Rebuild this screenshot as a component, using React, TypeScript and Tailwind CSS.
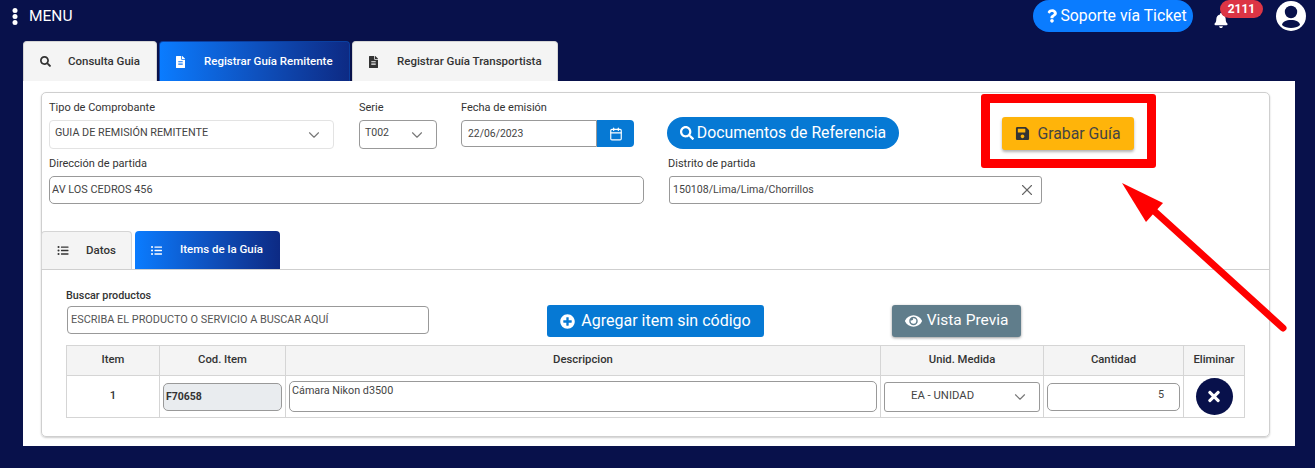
import { Calendar, ChevronDown, X } from "lucide-react";
import { FaBell, FaEye, FaFileAlt, FaListUl, FaPlusCircle, FaQuestion, FaSave, FaSearch, FaTimes } from "react-icons/fa";

const Label = ({ children, className = "" }: { children: React.ReactNode; className?: string }) => (
  <div className={`h-[20px] text-[11px] leading-[16px] text-[#333] ${className}`}>{children}</div>
);

const Chevron = () => <ChevronDown strokeWidth={1.5} className="h-[18px] w-[18px] text-[#777]" />;

export default function App() {
  return (
    <div className="relative h-[468px] w-[1315px] overflow-hidden bg-[#08114b] font-['Roboto',sans-serif]">
      <header className="flex h-[41px] items-start text-white">
        <svg className="ml-[12px] mt-[8px]" width="6" height="17" viewBox="0 0 6 17" fill="currentColor">
          <circle cx="3" cy="2.6" r="2.5" /><circle cx="3" cy="8.5" r="2.5" /><circle cx="3" cy="14.4" r="2.5" />
        </svg>
        <span className="ml-[11px] mt-[7px] text-[15.5px] leading-[19px]">MENU</span>
        <div className="ml-auto flex h-[32px] w-[160px] items-center justify-center gap-[3px] rounded-full bg-[#0a7cff] pl-[8px] text-[15.8px]">
          <FaQuestion className="h-[14px] w-[10px]" />
          <span>Soporte vía Ticket</span>
        </div>
        <div className="relative ml-[21px] mt-[13px] h-[15px] w-[15px]">
          <FaBell className="h-[15px] w-[14px]" />
          <span className="absolute left-[6px] top-[-13px] flex h-[18px] w-[43px] items-center justify-center rounded-full bg-[#dc3545] text-[12px] font-bold">2111</span>
        </div>
        <svg className="ml-[47px] mr-[9px] mt-[1px]" width="30" height="30" viewBox="0 0 30 30">
          <circle cx="15" cy="15" r="15" fill="#fff" />
          <circle cx="15" cy="11" r="6.2" fill="#08114b" />
          <path d="M6 24 C6.5 20.5 10 19 15 19 C20 19 23.5 20.5 24 24 C21.5 26.2 18.5 27 15 27 C11.5 27 8.5 26.2 6 24 Z" fill="#08114b" />
        </svg>
      </header>

      <nav className="ml-[23px] flex h-[40px] items-stretch gap-[2px] text-[11.5px] font-medium">
        <div className="flex w-[134px] items-center gap-[17px] rounded-t-[4px] border border-b-0 border-[#d5d5d5] bg-[#f4f4f4] pl-[16px] text-[#333]">
          <FaSearch className="h-[11px] w-[11px]" /><span>Consulta Guia</span>
        </div>
        <div className="flex w-[191px] items-center gap-[19px] rounded-t-[4px] border border-b-0 border-[#0a3fa0] bg-gradient-to-r from-[#0a7cff] to-[#0d2a84] pl-[16px] text-white">
          <FaFileAlt className="h-[12px] w-[9px]" /><span>Registrar Guía Remitente</span>
        </div>
        <div className="flex w-[206px] items-center gap-[19px] rounded-t-[4px] border border-b-0 border-[#d5d5d5] bg-[#f4f4f4] pl-[16px] text-[#333]">
          <FaFileAlt className="h-[12px] w-[9px]" /><span>Registrar Guía Transportista</span>
        </div>
      </nav>

      <main className="ml-[23px] h-[365px] w-[1272px] bg-white pl-[18px] pt-[11px]">
        <section className="h-[345px] w-[1229px] rounded-[5px] border border-[#cfcfcf] shadow-[0_1px_2px_rgba(0,0,0,0.2)]">
          <div className="flex h-[58px] pl-[7px] pt-[7px]">
            <div className="w-[310px]">
              <Label>Tipo de Comprobante</Label>
              <div className="flex h-[29px] w-[285px] items-center justify-between rounded-[4px] border border-[#e3e3e3] pl-[5px] pr-[10px] text-[10.8px] text-[#444]">
                <span className="pb-[3px]">GUIA DE REMISIÓN REMITENTE</span><Chevron />
              </div>
            </div>
            <div className="w-[102px]">
              <Label>Serie</Label>
              <div className="flex h-[29px] w-[78px] items-center justify-between rounded-[4px] border border-[#999] pl-[5px] pr-[10px] text-[10.5px] text-[#444]">
                <span className="pb-[3px]">T002</span><Chevron />
              </div>
            </div>
            <div className="w-[206px]">
              <Label>Fecha de emisión</Label>
              <div className="flex h-[27px] w-[173px]">
                <div className="flex flex-1 items-center rounded-l-[4px] border border-[#999] pl-[6px] text-[10.4px] text-[#444]">22/06/2023</div>
                <div className="flex w-[37px] items-center justify-center rounded-r-[4px] bg-[#0679d4] text-white"><Calendar strokeWidth={2} className="h-[14px] w-[14px]" /></div>
              </div>
            </div>
            <div className="mt-[17px] flex h-[32px] w-[232px] items-center justify-center gap-[3px] rounded-full bg-[#0679d4] text-[15.8px] text-white">
              <FaSearch className="h-[14px] w-[14px]" /><span>Documentos de Referencia</span>
            </div>
            <div className="ml-[103px] mt-[17px] flex h-[33px] w-[132px] items-center justify-center gap-[7px] rounded-[3px] bg-[#ffb40a] text-[15.8px] text-[#444] shadow-[0_2px_3px_rgba(0,0,0,0.3)]">
              <FaSave className="h-[15px] w-[15px] text-[#333]" /><span>Grabar Guía</span>
            </div>
          </div>

          <div className="flex h-[80px] pl-[7px] pt-[5px]">
            <div className="w-[619px]">
              <Label>Dirección de partida</Label>
              <div className="flex h-[28px] w-[595px] items-center rounded-[5px] border border-[#999] pl-[2px] text-[10.9px] text-[#444]">AV LOS CEDROS 456</div>
            </div>
            <div className="w-[374px]">
              <Label>Distrito de partida</Label>
              <div className="ml-[1px] flex h-[28px] w-[373px] items-center justify-between rounded-[3px] border border-[#999] pl-[3px] pr-[5px] text-[10.6px] text-[#444]">
                <span>150108/Lima/Lima/Chorrillos</span><X strokeWidth={1.5} className="h-[18px] w-[18px] text-[#666]" />
              </div>
            </div>
          </div>

          <div className="-ml-px flex h-[39px] gap-[3px] border-b border-[#cfcfcf] text-[11.5px] font-medium">
            <div className="flex w-[91px] items-center gap-[17px] rounded-t-[4px] border border-b-0 border-[#d5d5d5] bg-[#f4f4f4] pl-[15px] text-[#333]">
              <FaListUl className="h-[11px] w-[12px]" /><span>Datos</span>
            </div>
            <div className="flex w-[145px] items-center gap-[17px] rounded-t-[4px] bg-gradient-to-r from-[#0a7cff] to-[#0d2a84] pl-[15px] text-white">
              <FaListUl className="h-[11px] w-[13px]" /><span>Items de la Guía</span>
            </div>
          </div>

          <div className="pl-[24px] pt-[18px]">
            <div className="flex h-[57px]">
              <div className="w-[481px]">
                <div className="h-[18px] text-[10.8px] font-medium leading-[16px] text-[#333]">Buscar productos</div>
                <div className="ml-[1px] flex h-[28px] w-[362px] items-center rounded-[4px] border border-[#999] pl-[3px] text-[10.9px] text-[#555]">ESCRIBA EL PRODUCTO O SERVICIO A BUSCAR AQUÍ</div>
              </div>
              <div className="mt-[17px] flex h-[32px] w-[217px] items-center justify-center gap-[6px] rounded-[3px] bg-[#0679d4] text-[16px] text-white">
                <FaPlusCircle className="h-[15px] w-[15px]" /><span>Agregar item sin código</span>
              </div>
              <div className="ml-[128px] mt-[17px] flex h-[32px] w-[129px] items-center justify-center gap-[5px] rounded-[3px] bg-[#607d8b] text-[15.5px] text-white shadow-[0_1px_3px_rgba(0,0,0,0.4)]">
                <FaEye className="h-[16px] w-[17px]" /><span>Vista Previa</span>
              </div>
            </div>
            <table className="h-[72px] w-[1178px] table-fixed border-collapse text-[11.3px] text-[#333]">
              <colgroup>
                <col className="w-[93px]" /><col className="w-[126px]" /><col className="w-[595px]" /><col className="w-[163px]" /><col className="w-[140px]" /><col className="w-[61px]" />
              </colgroup>
              <thead>
                <tr className="h-[30px] bg-[#f4f4f4]">
                  {["Item", "Cod. Item", "Descripcion", "Unid. Medida", "Cantidad", "Eliminar"].map((h) => (
                    <th key={h} className="border border-[#d5d5d5] p-0 text-center font-medium">{h}</th>
                  ))}
                </tr>
              </thead>
              <tbody>
                <tr className="h-[42px]">
                  <td className="border border-[#d5d5d5] p-0 text-center font-medium">1</td>
                  <td className="border border-[#d5d5d5] px-[3px] py-0">
                    <div className="flex h-[28px] items-center rounded-[5px] border border-[#999] bg-[#e9ecef] pl-[2px] text-[10.5px] font-bold">F70658</div>
                  </td>
                  <td className="border border-[#d5d5d5] px-[3px] py-0">
                    <div className="h-[31px] rounded-[5px] border border-[#999] pl-[2px] pt-[1px] text-[10.8px] text-[#444]">Cámara Nikon d3500</div>
                  </td>
                  <td className="border border-[#d5d5d5] px-[3px] py-0">
                    <div className="flex h-[30px] items-center justify-between rounded-[3px] border border-[#999] pl-[26px] pr-[10px] text-[11.3px] text-[#444]">
                      <span>EA - UNIDAD</span><Chevron />
                    </div>
                  </td>
                  <td className="border border-[#d5d5d5] px-[3px] py-0">
                    <div className="flex h-[28px] items-center justify-end rounded-[5px] border border-[#999] pb-[3px] pr-[15px] text-[10.8px] text-[#444]">5</div>
                  </td>
                  <td className="border border-[#d5d5d5] p-0">
                    <div className="mx-auto flex h-[37px] w-[37px] items-center justify-center rounded-full bg-[#08114b] text-white"><FaTimes className="h-[17px] w-[14px]" /></div>
                  </td>
                </tr>
              </tbody>
            </table>
          </div>
        </section>
      </main>

      <div className="absolute left-[981px] top-[94px] h-[74px] w-[175px] rounded-[3px] border-[9px] border-[#ff0000]" />
      <svg className="absolute left-0 top-0" width="1315" height="468" fill="none">
        <polygon points="1122,183 1163,203 1146,222" fill="#ff0000" />
        <line x1="1152" y1="209" x2="1283" y2="328" stroke="#ff0000" strokeWidth="7" strokeLinecap="round" />
      </svg>
    </div>
  );
}
